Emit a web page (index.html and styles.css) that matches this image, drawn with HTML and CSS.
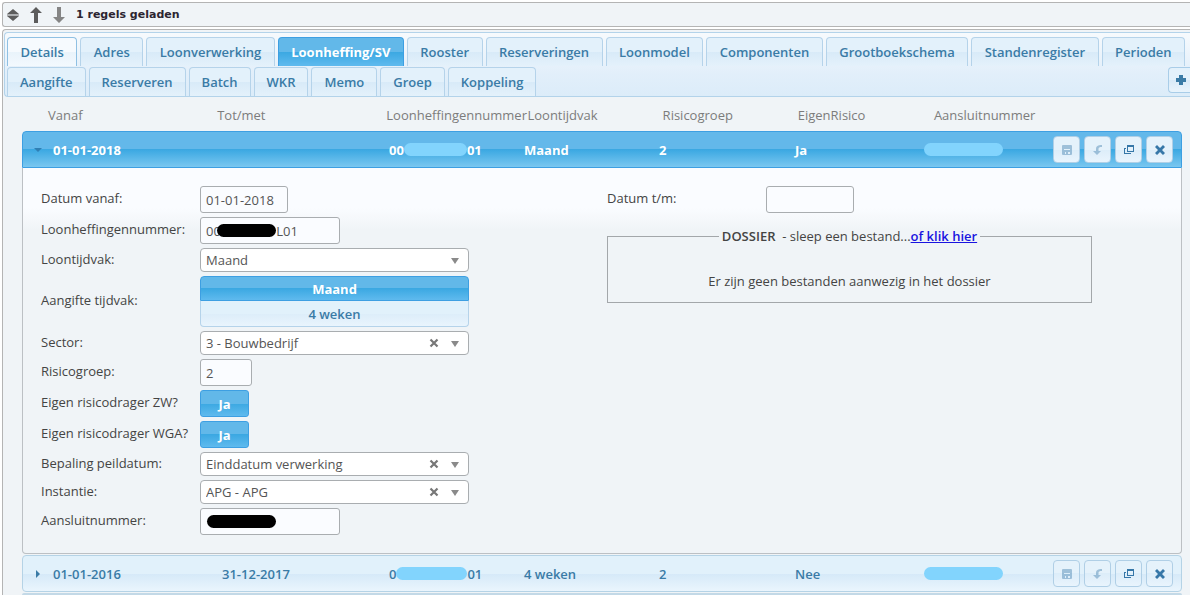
FILE: index.html
```html
<!DOCTYPE html>
<html lang="nl">
<head>
  <meta charset="UTF-8">
  <meta name="viewport" content="width=device-width, initial-scale=1.0">
  <title>Loonheffing/SV</title>
  <link rel="stylesheet" href="styles.css">
</head>
<body>
  <!-- Icons -->
  <svg class="sprite" aria-hidden="true">
    <symbol id="icon-save" viewBox="0 0 10 10"><path fill-rule="evenodd" d="M1 0h8a1 1 0 0 1 1 1v8a1 1 0 0 1-1 1H1a1 1 0 0 1-1-1V1a1 1 0 0 1 1-1zM2 4v1h6V4zM3 7v2h1V7zM6 7v2h2V7z"/></symbol>
    <symbol id="icon-undo" viewBox="0 0 10 10"><path d="M9 0v2C6.500 2 5.500 2.500 5.500 4v2H8l-4 4-4-4h3V4c0-3 2-4 6-4z"/></symbol>
    <symbol id="icon-copy" viewBox="0 0 10 10"><path fill-rule="evenodd" d="M3 0h7v7H3zM4 2v4h5V2z"/><path d="M0 3h2v1H1v4h5V8h1v1H0z"/></symbol>
    <symbol id="icon-close" viewBox="0 0 10 10"><path d="M2 0l3 3 3-3 2 2-3 3 3 3-2 2-3-3-3 3-2-2 3-3-3-3z"/></symbol>
    <symbol id="icon-clear" viewBox="0 0 10 10"><path d="M1.500 1.500l7 7M8.500 1.500l-7 7" fill="none" stroke="currentColor" stroke-width="2.200"/></symbol>
  </svg>

  <div class="toolbar">
    <button class="tool" aria-label="Sorteren"><svg width="12" height="14" viewBox="0 0 12 14"><path d="M6 1l6 5H0zM0 8h12l-6 5z"/><path d="M0 6h12v2H0z" opacity=".45"/></svg></button>
    <button class="tool" aria-label="Omhoog"><svg width="12" height="16" viewBox="0 0 12 16"><path d="M6 0l6 6H8v10H4V6H0z"/></svg></button>
    <button class="tool down" aria-label="Omlaag"><svg width="12" height="16" viewBox="0 0 12 16"><path d="M6 16l6-6H8V0H4v10H0z"/></svg></button>
    <span class="status">1 regels geladen</span>
  </div>

  <div class="panel">
    <nav class="tabs">
      <div class="tab-row tab-row-main">
        <a class="tab focus" href="#details">Details</a>
        <a class="tab" href="#adres">Adres</a>
        <a class="tab" href="#loonverwerking">Loonverwerking</a>
        <a class="tab active" href="#loonheffing">Loonheffing/SV</a>
        <a class="tab" href="#rooster">Rooster</a>
        <a class="tab" href="#reserveringen">Reserveringen</a>
        <a class="tab" href="#loonmodel">Loonmodel</a>
        <a class="tab" href="#componenten">Componenten</a>
        <a class="tab" href="#grootboekschema">Grootboekschema</a>
        <a class="tab" href="#standenregister">Standenregister</a>
        <a class="tab" href="#perioden">Perioden</a>
      </div>
      <div class="tab-row">
        <a class="tab" href="#aangifte">Aangifte</a>
        <a class="tab" href="#reserveren">Reserveren</a>
        <a class="tab" href="#batch">Batch</a>
        <a class="tab" href="#wkr">WKR</a>
        <a class="tab" href="#memo">Memo</a>
        <a class="tab" href="#groep">Groep</a>
        <a class="tab" href="#koppeling">Koppeling</a>
        <button class="add" aria-label="Toevoegen"><svg width="10" height="10" viewBox="0 0 10 10"><path d="M3 0h4v3h3v4H7v3H3V7H0V3h3z"/></svg></button>
      </div>
    </nav>

    <div class="records">
      <div class="columns">
        <span>Vanaf</span>
        <span>Tot/met</span>
        <span>Loonheffingennummer</span>
        <span>Loontijdvak</span>
        <span>Risicogroep</span>
        <span>EigenRisico</span>
        <span>Aansluitnummer</span>
      </div>

      <div class="record open">
        <svg class="arrow" width="8" height="8" viewBox="0 0 8 8"><path d="M0 2h8L4 6z"/></svg>
        <div class="cells">
          <span>01-01-2018</span>
          <span></span>
          <span class="masked">00<i class="mask"></i>01</span>
          <span>Maand</span>
          <span>2</span>
          <span>Ja</span>
          <span class="masked"><i class="mask wide"></i></span>
        </div>
        <div class="actions">
          <button class="action" aria-label="Opslaan" disabled><svg><use href="#icon-save"/></svg></button>
          <button class="action" aria-label="Herstellen" disabled><svg><use href="#icon-undo"/></svg></button>
          <button class="action" aria-label="Kopiëren"><svg><use href="#icon-copy"/></svg></button>
          <button class="action" aria-label="Verwijderen"><svg><use href="#icon-close"/></svg></button>
        </div>
      </div>

      <form class="details">
        <div class="fields">
          <label for="vanaf">Datum vanaf:</label>
          <input class="date" id="vanaf" type="text" value="01-01-2018">

          <label for="lhnummer">Loonheffingennummer:</label>
          <div class="box redacted">
            <input id="lhnummer" type="text" value="00&#8199;&#8199;&#8199;&#8199;&#8199;&#8199;&#8199;&nbsp;L01">
            <i class="ink ink-number"></i>
          </div>

          <label for="loontijdvak">Loontijdvak:</label>
          <div class="box select">
            <select id="loontijdvak"><option>Maand</option><option>4 weken</option></select>
          </div>

          <span class="label" id="aangifte-label">Aangifte tijdvak:</span>
          <div class="buttonset" role="group" aria-labelledby="aangifte-label">
            <button type="button" class="on">Maand</button>
            <button type="button">4 weken</button>
          </div>

          <label for="sector">Sector:</label>
          <div class="box select">
            <select id="sector"><option>3 - Bouwbedrijf</option></select>
            <button type="button" class="clear" aria-label="Wissen"><svg><use href="#icon-clear"/></svg></button>
          </div>

          <label for="risicogroep">Risicogroep:</label>
          <input class="short" id="risicogroep" type="text" value="2">

          <label for="zw">Eigen risicodrager ZW?</label>
          <button type="button" class="toggle" id="zw">Ja</button>

          <label for="wga">Eigen risicodrager WGA?</label>
          <button type="button" class="toggle" id="wga">Ja</button>

          <label for="peildatum">Bepaling peildatum:</label>
          <div class="box select">
            <select id="peildatum"><option>Einddatum verwerking</option></select>
            <button type="button" class="clear" aria-label="Wissen"><svg><use href="#icon-clear"/></svg></button>
          </div>

          <label for="instantie">Instantie:</label>
          <div class="box select">
            <select id="instantie"><option>APG - APG</option></select>
            <button type="button" class="clear" aria-label="Wissen"><svg><use href="#icon-clear"/></svg></button>
          </div>

          <label for="aansluit">Aansluitnummer:</label>
          <div class="box redacted">
            <input id="aansluit" type="text">
            <i class="ink ink-full"></i>
          </div>
        </div>

        <div class="side">
          <div class="fields">
            <label for="tm">Datum t/m:</label>
            <input class="date" id="tm" type="text">
          </div>
          <fieldset class="dossier">
            <legend><b>DOSSIER</b>&nbsp; - sleep een bestand...<a href="#upload">of klik hier</a></legend>
            <p>Er zijn geen bestanden aanwezig in het dossier</p>
          </fieldset>
        </div>
      </form>

      <div class="record">
        <svg class="arrow" width="8" height="8" viewBox="0 0 8 8"><path d="M2 0v8l4-4z"/></svg>
        <div class="cells">
          <span>01-01-2016</span>
          <span>31-12-2017</span>
          <span class="masked">0<i class="mask over"></i>01</span>
          <span>4 weken</span>
          <span>2</span>
          <span>Nee</span>
          <span class="masked"><i class="mask wide"></i></span>
        </div>
        <div class="actions">
          <button class="action" aria-label="Opslaan" disabled><svg><use href="#icon-save"/></svg></button>
          <button class="action" aria-label="Herstellen" disabled><svg><use href="#icon-undo"/></svg></button>
          <button class="action" aria-label="Kopiëren"><svg><use href="#icon-copy"/></svg></button>
          <button class="action" aria-label="Verwijderen"><svg><use href="#icon-close"/></svg></button>
        </div>
      </div>
      <div class="next"></div>
    </div>
  </div>
</body>
</html>
```

FILE: styles.css
```css
* {
  box-sizing: border-box;
}

body {
  margin: 0;
  padding: 2px 0 0 2px;
  background: #fff;
  color: #444;
  font: 13px/18px "Open Sans", "Noto Sans", sans-serif;
}

button, input, select {
  font: inherit;
  color: inherit;
  margin: 0;
}

button {
  padding: 0;
  cursor: pointer;
}

svg {
  display: block;
  fill: currentColor;
}

.sprite {
  position: absolute;
  width: 0;
  height: 0;
}

/* toolbar */
.toolbar {
  display: flex;
  align-items: center;
  gap: 11px;
  height: 25px;
  padding-left: 4px;
  background: #f0f4f7;
  border: 1px solid #b4b4b4;
  border-right: none;
  border-radius: 3px 0 0 3px;
}

.tool {
  border: none;
  background: none;
  color: #5c5c5c;
}

.tool.down {
  color: #858585;
}

.status {
  font: bold 11px/18px "DejaVu Sans", sans-serif;
  color: #2c2430;
}

/* tabs */
.panel {
  margin-top: 2px;
  padding: 2px 0 0 1px;
  background: #f0f4f7;
  border: 1px solid #b4b4b4;
  border-right: none;
  border-bottom: none;
  border-radius: 4px 0 0 0;
}

.tabs {
  padding: 4px 0 0 2px;
  background: linear-gradient(#f6fafd, #e2effa 40px, #dcecf9);
  border: 1px solid #b3d3ea;
  border-right: none;
  border-radius: 4px 0 0 4px;
}

.tab-row {
  display: flex;
  gap: 3px;
}

.tab-row-main {
  padding-right: 5px;
  margin-bottom: 1px;
}

.tab-row-main .tab {
  flex: 1 1 auto;
}

.tab {
  height: 29px;
  padding: 5px 12px;
  border: 1px solid #b5d3ea;
  border-bottom: none;
  border-radius: 4px 4px 0 0;
  background: linear-gradient(#e3f1fb 50%, #d8eaf8 50%, #e4f1fb);
  color: #3a7ba6;
  font-weight: 600;
  text-align: center;
  text-decoration: none;
  white-space: nowrap;
}

.tab.focus {
  background: linear-gradient(#f6fafe 50%, #e9f3fb 50%, #f3f9fe);
  border-color: #8fc0e3;
}

.tab.active {
  background: linear-gradient(#62b8e9 50%, #3ba8e2 50%, #5fbaee);
  border-color: #3d9fe2;
  color: #fff;
  font-weight: bold;
}

.add {
  display: flex;
  align-items: center;
  width: 22px;
  height: 26px;
  margin-left: auto;
  padding-left: 7px;
  border: 1px solid #a9cde8;
  border-right: none;
  border-radius: 4px 0 0 4px;
  background: linear-gradient(#e3f1fb 50%, #d8eaf8 50%, #e9f4fc);
  color: #3a7ba6;
}

/* records */
.records {
  padding: 9px 8px 0 18px;
}

.columns {
  display: grid;
  grid-template-columns: 169fr 169fr 141fr 135fr 135fr 136fr 120fr;
  height: 25px;
  margin: 0 128px 0 26px;
  color: #7c7c7c;
  white-space: nowrap;
}

.record {
  display: flex;
  align-items: center;
  height: 37px;
  padding: 0 8px 0 11px;
  border: 1px solid #b5d3e6;
  border-radius: 4px;
  background: linear-gradient(#e1f1fb 50%, #d5e9f8 50%, #eaf5fd);
  color: #3a7ba6;
  font-weight: 600;
}

.record.open {
  border-color: #3d9fe2;
  border-radius: 4px 4px 0 0;
  background: linear-gradient(#63b8ea 50%, #3ba8e2 50%, #7ac7f0);
  color: #fff;
  font-weight: bold;
}

.next {
  height: 2px;
  margin-top: 1px;
  border-radius: 2px 2px 0 0;
  background: #c3d9e7;
}

.arrow {
  flex: none;
  margin-right: 11px;
}

.record.open .arrow {
  color: #2f7fb4;
}

.cells {
  flex: 1;
  display: grid;
  grid-template-columns: 169fr 167fr 135fr 135fr 136fr 129fr 129fr;
  white-space: nowrap;
}

.masked {
  display: flex;
  align-items: center;
}

.mask {
  width: 63px;
  height: 13px;
  border-radius: 7px;
  background: #82d4fd;
}

.mask.over {
  width: 71px;
}

.mask.wide {
  width: 79px;
}

.actions {
  display: flex;
  gap: 4px;
}

.action {
  display: flex;
  align-items: center;
  justify-content: center;
  width: 27px;
  height: 27px;
  border: 1px solid #b0cfe6;
  border-radius: 4px;
  background: linear-gradient(#e5f2fb 50%, #dcedf9 50%, #e9f4fd);
  color: #3677a8;
}

.action svg {
  width: 10px;
  height: 10px;
}

.action:disabled svg {
  opacity: 0.4;
}

/* detail form */
.details {
  display: grid;
  grid-template-columns: 1fr 1fr;
  margin-bottom: 1px;
  padding: 18px 8px 18px 18px;
  border: 1px solid #bcc0c4;
  border-top: none;
  border-radius: 0 0 4px 4px;
  background: linear-gradient(#fafcff 40px, #f0f4f7 62px);
}

.fields {
  display: grid;
  grid-template-columns: 159px minmax(0, 269px);
  gap: 4px 0;
  align-items: center;
  justify-items: start;
  align-content: start;
}

.fields label,
.fields .label {
  padding-bottom: 3px;
  white-space: nowrap;
}

.fields input {
  width: 100%;
  height: 27px;
  padding: 0 5px;
  border: 1px solid #a9adb0;
  border-radius: 3px;
  background: #fafcff;
  color: #555;
}

.fields .date {
  width: 88px;
}

.fields .short {
  width: 52px;
}

.box {
  position: relative;
  width: 100%;
}

.redacted {
  max-width: 140px;
}

.ink {
  position: absolute;
  top: 7px;
  height: 13px;
  border-radius: 7px;
  background: #000;
}

.ink-number {
  left: 17px;
  width: 59px;
}

.ink-full {
  left: 7px;
  width: 69px;
}

.box select {
  display: block;
  width: 100%;
  height: 24px;
  padding: 0 5px;
  border: 1px solid #a9adb0;
  border-radius: 4px;
  background: #fff;
  color: #555;
  appearance: none;
}

.select::after {
  content: "";
  position: absolute;
  top: 10px;
  right: 10px;
  border: 4px solid transparent;
  border-top: 6px solid #8a8a8a;
  border-bottom: none;
  pointer-events: none;
}

.clear {
  position: absolute;
  top: 7px;
  right: 30px;
  border: none;
  background: none;
  color: #777;
}

.clear svg {
  width: 10px;
  height: 10px;
}

.buttonset {
  display: flex;
  flex-direction: column;
  width: 100%;
}

.buttonset button {
  height: 26px;
  border: 1px solid #b5d3ea;
  border-top: none;
  border-radius: 0 0 4px 4px;
  background: linear-gradient(#e1f1fb 50%, #dcedf9 50%, #e9f4fd);
  color: #3a7ba6;
  font-weight: 600;
}

.buttonset .on,
.toggle {
  border: 1px solid #3d9fe2;
  background: linear-gradient(#62b8e9 50%, #3ba8e2 50%, #5fbaee);
  color: #fff;
  font-weight: bold;
}

.buttonset .on {
  height: 25px;
  border-radius: 4px 4px 0 0;
}

.toggle {
  width: 49px;
  height: 27px;
  border-radius: 3px;
}

.dossier {
  max-width: 485px;
  margin: 14px 0 0;
  padding: 27px 0 12px;
  border: 1px solid #a3a7aa;
  text-align: center;
}

.dossier legend {
  margin: 0 auto;
  padding: 0 3px;
}

.dossier b {
  font-weight: 600;
}

.dossier a {
  color: #1a14e0;
  font-weight: 600;
}

.dossier p {
  margin: 0;
}
```
